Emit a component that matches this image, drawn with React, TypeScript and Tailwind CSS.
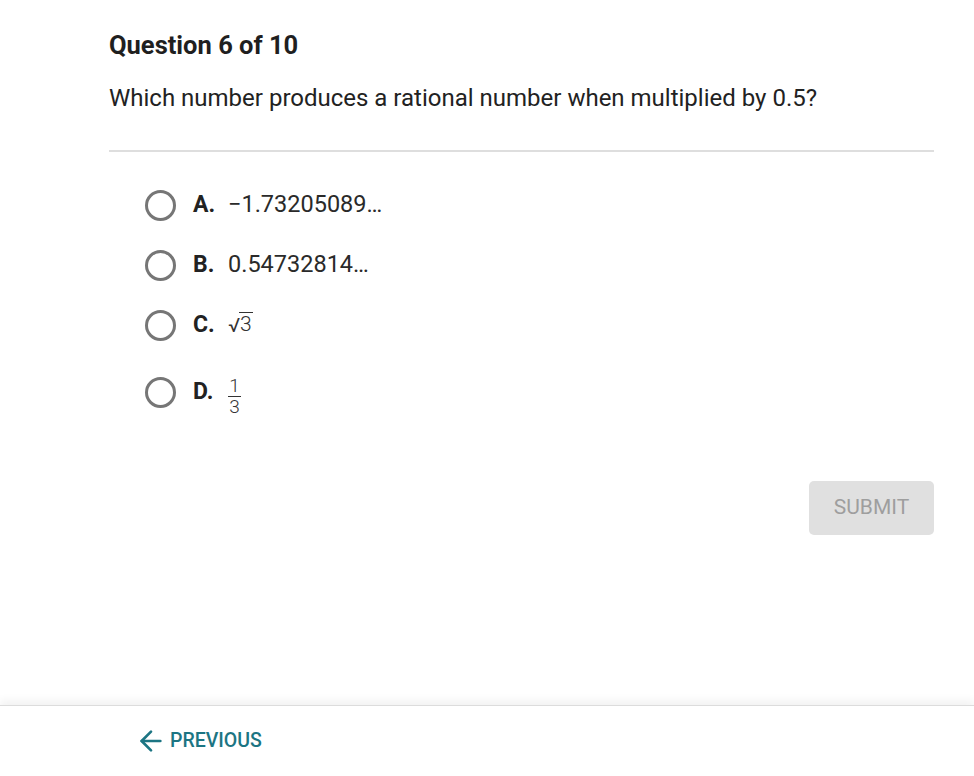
import { ArrowLeft } from 'lucide-react'

const font = { fontFamily: 'Roboto, "Liberation Sans", sans-serif' }

function Radio() {
  return <span className="w-[31px] h-[31px] rounded-full border-[3px] border-[#767676] bg-white shrink-0" />
}

function Sqrt({ n }: { n: string }) {
  return (
    <span className="inline-flex items-end text-[21px] leading-none text-[#333]">
      <span className="text-[20px] -mr-[1px]">√</span>
      <span className="border-t border-[#333] pt-[1px] px-[1px] font-light">{n}</span>
    </span>
  )
}

function Frac({ a, b }: { a: string; b: string }) {
  return (
    <span className="inline-flex flex-col items-center text-[19px] leading-[20px] text-[#333] font-light">
      <span>{a}</span>
      <span className="w-[13px] border-t border-[#333]" />
      <span>{b}</span>
    </span>
  )
}

export default function App() {
  const opts = [
    { k: 'A.', v: <span>−1.73205089…</span>, h: 'h-[60px]' },
    { k: 'B.', v: <span>0.54732814…</span>, h: 'h-[60px]' },
    { k: 'C.', v: <Sqrt n="3" />, h: 'h-[60px]' },
    { k: 'D.', v: <Frac a="1" b="3" />, h: 'h-[74px]' },
  ]
  return (
    <div className="h-screen flex flex-col bg-white text-[#222]" style={font}>
      <div className="flex-1">
        <div className="ml-[109px] w-[825px] pt-[28px]">
          <h1 className="text-[25.5px] leading-[34px] font-bold text-[#1f1f1f]">Question 6 of 10</h1>
          <p className="mt-[20px] text-[24px] leading-[32px] text-[#222]">Which number produces a rational number when multiplied by 0.5?</p>
          <div className="mt-[36px] h-[2px] bg-[#dedede]" />
          <div className="mt-[23px] pl-[36px] flex flex-col">
            {opts.map(o => (
              <div key={o.k} className={`flex items-center ${o.h}`}>
                <Radio />
                <span className="ml-[17px] w-[35px] text-[23px] font-bold text-[#222]">{o.k}</span>
                <span className="text-[23.5px] text-[#2a2a2a]">{o.v}</span>
              </div>
            ))}
          </div>
          <div className="mt-[52px] flex justify-end">
            <button className="w-[125px] h-[54px] rounded-[5px] bg-[#e0e0e0] text-[21px] text-[#9e9e9e]">SUBMIT</button>
          </div>
        </div>
      </div>
      <div className="h-[71px] border-t border-[#dcdcdc] shadow-[0_-5px_8px_rgba(0,0,0,0.05)] flex items-center">
        <button className="ml-[135px] flex items-center gap-[3px] text-[#1c7583] text-[19.5px] font-medium">
          <ArrowLeft size={32} strokeWidth={2} />
          PREVIOUS
        </button>
      </div>
    </div>
  )
}
